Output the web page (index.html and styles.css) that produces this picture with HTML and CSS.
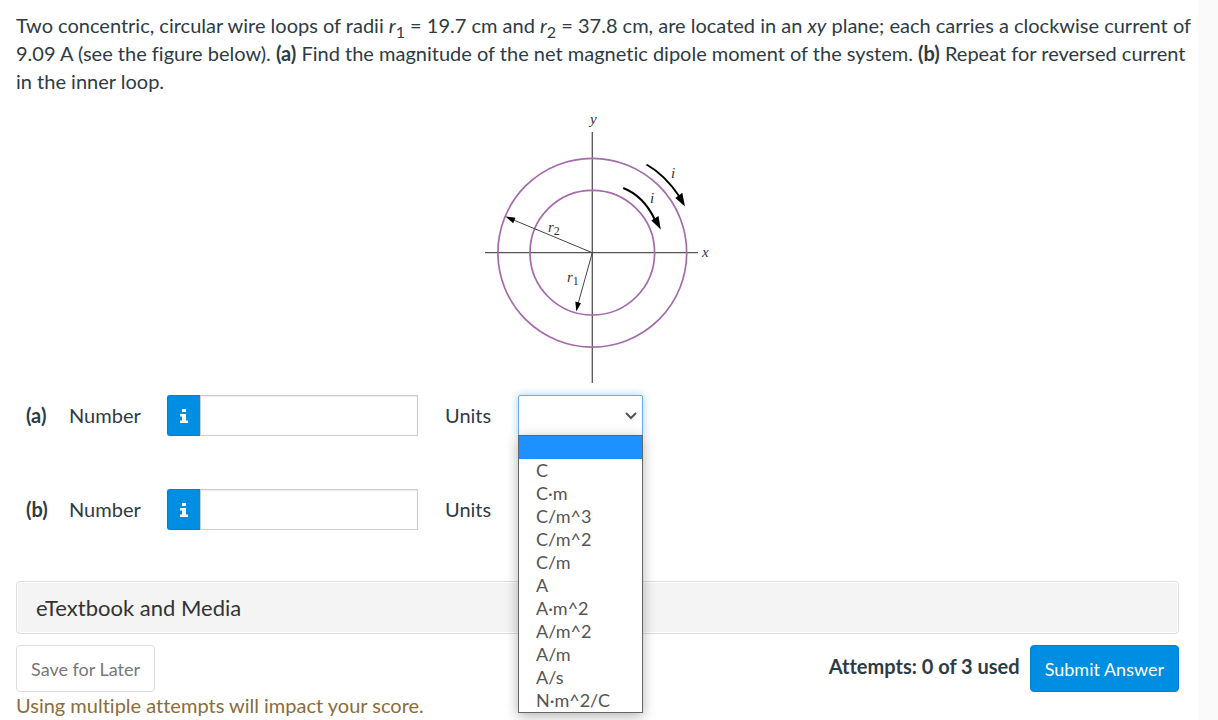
FILE: index.html
```html
<!DOCTYPE html>
<html lang="en">
<head>
  <meta charset="UTF-8">
  <meta name="viewport" content="width=device-width, initial-scale=1.0">
  <title>Magnetic Dipole Moment</title>
  <link rel="stylesheet" href="styles.css">
</head>
<body>
  <main class="question">
    <p class="prompt">Two concentric, circular wire loops of radii <i>r</i><sub>1</sub> = 19.7 cm and <i>r</i><sub>2</sub> = 37.8 cm, are located in an <i>xy</i> plane; each carries a clockwise current of 9.09 A (see the figure below). <b>(a)</b> Find the magnitude of the net magnetic dipole moment of the system. <b>(b)</b> Repeat for reversed current in the inner loop.</p>

    <svg class="figure" viewBox="480 110 235 275" role="img" aria-label="Two concentric loops in the xy plane">
      <!-- axes -->
      <path class="axis" d="M592.3 132V383M485 252.7H698" />
      <!-- loops -->
      <circle class="loop" cx="592.3" cy="252.7" r="94.4" />
      <circle class="loop" cx="592.3" cy="252.7" r="62.3" />
      <!-- radii -->
      <path class="radius" d="M592.3 252.7L510 218.5M592.3 252.7L578 304" />
      <path d="M505.5 216.5L515.5 217.8L513.2 223.2Z" />
      <path d="M576.3 311.5L575.3 301.5L581 303.3Z" />
      <!-- current direction -->
      <path class="current" d="M646.5 164.5Q665 175 679 196" />
      <path d="M685 206.5L675.3 198L682.3 192.8Z" />
      <path class="current" d="M623.2 188Q643.5 196 654.5 219" />
      <path d="M660.8 229.5L651.3 220.5L658.5 216Z" />
      <text x="590" y="124">y</text>
      <text x="702" y="257">x</text>
      <text x="671" y="178">i</text>
      <text x="650" y="203">i</text>
      <text x="548" y="232">r<tspan class="index" dy="3">2</tspan></text>
      <text x="567" y="282">r<tspan class="index" dy="3">1</tspan></text>
    </svg>

    <form>
      <div class="answer">
        <b class="part">(a)</b>
        <label class="number" for="numberA">Number</label>
        <div class="input-group">
          <button type="button" class="info" aria-label="Information about part a">
            <svg viewBox="0 0 8 14"><path d="M2 0h4v3H2zM0 5h6v6.5h2V14H0v-2.5h2v-4H0z" /></svg>
          </button>
          <input type="text" id="numberA">
        </div>
        <label class="units" for="unitsA">Units</label>
        <div class="dropdown">
          <select id="unitsA" class="open">
            <option></option>
            <option>C</option>
            <option>C·m</option>
            <option>C/m^3</option>
            <option>C/m^2</option>
            <option>C/m</option>
            <option>A</option>
            <option>A·m^2</option>
            <option>A/m^2</option>
            <option>A/m</option>
            <option>A/s</option>
            <option>N·m^2/C</option>
          </select>
          <svg class="chevron" viewBox="0 0 12 8"><path d="M1 1l5 5 5-5" /></svg>
          <ul class="menu" role="listbox" aria-label="Units">
            <li class="active" role="option" aria-selected="true"></li>
            <li role="option">C</li>
            <li role="option">C·m</li>
            <li role="option">C/m^3</li>
            <li role="option">C/m^2</li>
            <li role="option">C/m</li>
            <li role="option">A</li>
            <li role="option">A·m^2</li>
            <li role="option">A/m^2</li>
            <li role="option">A/m</li>
            <li role="option">A/s</li>
            <li role="option">N·m^2/C</li>
          </ul>
        </div>
      </div>

      <div class="answer">
        <b class="part">(b)</b>
        <label class="number" for="numberB">Number</label>
        <div class="input-group">
          <button type="button" class="info" aria-label="Information about part b">
            <svg viewBox="0 0 8 14"><path d="M2 0h4v3H2zM0 5h6v6.5h2V14H0v-2.5h2v-4H0z" /></svg>
          </button>
          <input type="text" id="numberB">
        </div>
        <label class="units" for="unitsB">Units</label>
        <div class="dropdown">
          <select id="unitsB">
            <option></option>
          </select>
        </div>
      </div>

      <button type="button" class="resources">eTextbook and Media</button>

      <div class="actions">
        <button type="button" class="save">Save for Later</button>
        <span class="attempts">Attempts: 0 of 3 used</span>
        <button type="submit" class="submit">Submit Answer</button>
      </div>
      <p class="notice">Using multiple attempts will impact your score.</p>
    </form>
  </main>
</body>
</html>
```

FILE: styles.css
```css
* {
  box-sizing: border-box;
}

body {
  margin: 0;
  background-color: #fafafa;
  color: #2d3b45;
  font-family: Lato, "Liberation Sans", sans-serif;
  font-size: 20px;
  line-height: 27px;
  font-variant-ligatures: no-common-ligatures;
}

button,
input,
select {
  font-family: inherit;
  font-size: 18px;
}

button {
  cursor: pointer;
}

.question {
  min-height: 100vh;
  margin-right: 20px;
  padding: 11px 19px 0 16px;
  background-color: #fff;
}

.prompt {
  margin: 0 -19px 0 0;
  line-height: 28px;
}

sub {
  font-size: 16px;
  line-height: 0;
}

/* Figure */
.figure {
  display: block;
  width: 235px;
  height: 275px;
  margin: 15px auto 10px;
}

.figure text {
  fill: #333;
  font: italic 15px "Liberation Serif", serif;
}

.figure .index {
  font-size: 12px;
  font-style: normal;
}

.axis {
  fill: none;
  stroke: #555;
  stroke-width: 1.3;
}

.loop {
  fill: none;
  stroke: #a569ac;
  stroke-width: 1.7;
}

.radius {
  fill: none;
  stroke: #444;
}

.current {
  fill: none;
  stroke: #000;
  stroke-width: 2;
}

/* Answers */
.answer {
  display: flex;
  align-items: center;
  margin-bottom: 53px;
  padding-left: 10px;
}

.part {
  width: 43px;
}

.number {
  width: 98px;
}

.input-group {
  display: flex;
  width: 251px;
  height: 41px;
  margin-right: 27px;
}

.info {
  display: flex;
  align-items: center;
  justify-content: center;
  width: 33px;
  padding: 0;
  background-color: #008ee2;
  border: 1px solid #0081cc;
  border-right: none;
  border-radius: 3px 0 0 3px;
}

.info svg {
  width: 8px;
  height: 14px;
  fill: #fff;
}

.input-group input {
  flex: 1;
  min-width: 0;
  padding: 0 10px;
  border: 1px solid #c7cdd1;
  box-shadow: inset 0 1px 1px rgba(0, 0, 0, 0.08);
}

.units {
  width: 73px;
}

.dropdown {
  position: relative;
  width: 125px;
}

select {
  display: block;
  width: 100%;
  height: 41px;
  padding: 0 12px;
  appearance: none;
  background-color: #fff;
  border: 1px solid #c7cdd1;
  border-radius: 2px;
}

select.open {
  border-color: #66afe9;
  box-shadow: 0 0 8px rgba(102, 175, 233, 0.6);
}

.chevron {
  position: absolute;
  top: 17px;
  right: 6px;
  width: 12px;
  height: 8px;
  fill: none;
  stroke: #555;
  stroke-width: 2;
}

.menu {
  position: absolute;
  top: 40px;
  left: 0;
  z-index: 10;
  width: 100%;
  margin: 0;
  padding: 0;
  background-color: #fff;
  border: 1px solid #666;
  color: #555;
  font-size: 18px;
  line-height: 23px;
  list-style: none;
  box-shadow: 0 3px 12px rgba(0, 0, 0, 0.3);
}

.menu li {
  height: 23px;
  padding-left: 17px;
}

.menu .active {
  background-color: #1e90ff;
}

/* Footer */
.resources {
  display: block;
  width: 100%;
  height: 53px;
  margin-top: -2px;
  padding: 0 19px;
  background-color: #f4f4f4;
  border: 1px solid #ddd;
  border-radius: 4px;
  color: #333;
  font-size: 22px;
  text-align: left;
  box-shadow: inset 0 0 0 1px #fff;
}

.actions {
  display: flex;
  align-items: center;
  margin-top: 11px;
}

.save,
.submit {
  height: 47px;
  padding: 0 14px;
  border-radius: 4px;
}

.save {
  background-color: #fff;
  border: 1px solid #ddd;
  color: #777;
}

.attempts {
  margin: 0 10px 4px auto;
  font-weight: bold;
}

.submit {
  background-color: #008ee2;
  border: 1px solid #0081cc;
  color: #fff;
}

.notice {
  margin: 0;
  color: #8a6d3b;
}
```
